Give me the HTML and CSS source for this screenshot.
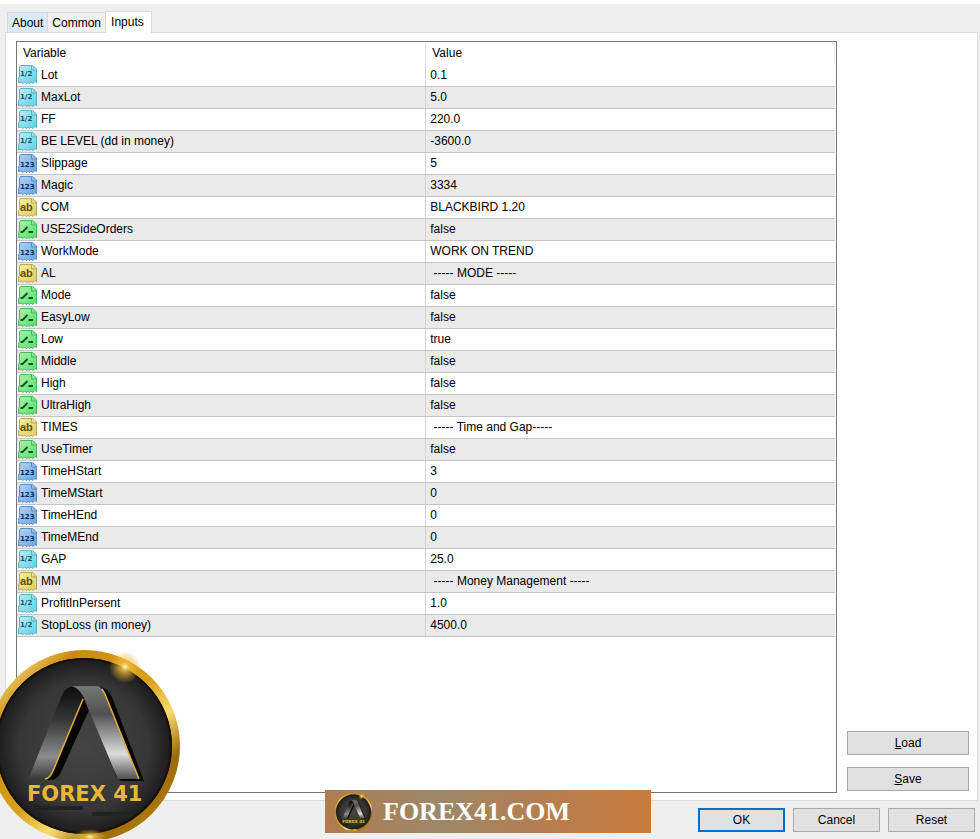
FILE: index.html
```
<!DOCTYPE html>
<html lang="en">
<head>
    <meta charset="UTF-8">
    <title>Inputs</title>
    <link rel="stylesheet" href="styles.css">
    <script src="script.js" defer></script>
</head>
<body>
<!-- shared fills and the icon sheet -->
<svg class="sprites" width="0" height="0" aria-hidden="true">
    <defs>
        <linearGradient id="cyan" x1="0" y1="0" x2="1" y2="1">
            <stop offset="0" stop-color="#b4f0f7"/>
            <stop offset="1" stop-color="#66cce2"/>
        </linearGradient>
        <linearGradient id="blue" x1="0" y1="0" x2="1" y2="1">
            <stop offset="0" stop-color="#b0d4fa"/>
            <stop offset="1" stop-color="#68a2e2"/>
        </linearGradient>
        <linearGradient id="yellow" x1="0" y1="0" x2="1" y2="1">
            <stop offset="0" stop-color="#f7efa0"/>
            <stop offset="1" stop-color="#e0cc5c"/>
        </linearGradient>
        <linearGradient id="green" x1="0" y1="0" x2="1" y2="1">
            <stop offset="0" stop-color="#a4f6a8"/>
            <stop offset="1" stop-color="#58dc70"/>
        </linearGradient>
        <linearGradient id="gold" x1="0" y1="0" x2="1" y2="1">
            <stop offset="0" stop-color="#c8860c"/>
            <stop offset="0.1" stop-color="#f0cc68"/>
            <stop offset="0.22" stop-color="#c98a10"/>
            <stop offset="0.5" stop-color="#d9a01c"/>
            <stop offset="0.64" stop-color="#f8dc70"/>
            <stop offset="0.78" stop-color="#9a6808"/>
            <stop offset="1" stop-color="#c8920f"/>
        </linearGradient>
        <radialGradient id="disc">
            <stop offset="0" stop-color="#454545"/>
            <stop offset="0.7" stop-color="#363636"/>
            <stop offset="1" stop-color="#161616"/>
        </radialGradient>
        <linearGradient id="legLeft" x1="0" y1="0" x2="0" y2="1">
            <stop offset="0" stop-color="#0c0c0c"/>
            <stop offset="0.35" stop-color="#333"/>
            <stop offset="0.75" stop-color="#8c8c8c"/>
            <stop offset="1" stop-color="#363636"/>
        </linearGradient>
        <linearGradient id="legRight" x1="0" y1="0" x2="0" y2="1">
            <stop offset="0" stop-color="#777"/>
            <stop offset="0.3" stop-color="#505050"/>
            <stop offset="0.73" stop-color="#dcdcdc"/>
            <stop offset="1" stop-color="#505050"/>
        </linearGradient>
        <radialGradient id="glow">
            <stop offset="0" stop-color="#fff6c8"/>
            <stop offset="0.3" stop-color="#f0bc38" stop-opacity="0.8"/>
            <stop offset="1" stop-color="#f0bc38" stop-opacity="0"/>
        </radialGradient>
        <g id="sheet">
            <path d="M1.500 2L2.500 .5H14.500L18.500 4V17.500L17 16.500L15 18.500L13 17L11.500 18.500L10 17.500L8 18.500L6.500 17L5 18.500L3 17L.6 18L.6 13L1.500 11Z"/>
            <path d="M13.500 .5V5H18.500" fill="none"/>
        </g>
    </defs>
</svg>

<main class="dialog">
    <div class="tabs" role="tablist">
        <button class="tab hover" role="tab">About</button>
        <button class="tab" role="tab">Common</button>
        <button class="tab active" role="tab" aria-selected="true">Inputs</button>
    </div>
    <div class="panel">
        <div class="list">
            <table>
                <thead>
                <tr>
                    <th>Variable</th>
                    <th>Value</th>
                </tr>
                </thead>
                <tbody></tbody>
            </table>
        </div>
        <div class="side">
            <button class="btn"><u>L</u>oad</button>
            <button class="btn"><u>S</u>ave</button>
        </div>
    </div>
    <div class="footer">
        <button class="btn primary">OK</button>
        <button class="btn">Cancel</button>
        <button class="btn">Reset</button>
    </div>
</main>

<svg class="badge" viewBox="0 0 192 192" role="img" aria-label="Forex 41">
    <g id="logo">
        <circle cx="96" cy="96" r="92" fill="url(#disc)" stroke="url(#gold)" stroke-width="8"/>
        <circle cx="96" cy="96" r="87" fill="none" stroke="#15100a" stroke-width="2"/>
        <path d="M40 130L74 45Q78 36 88 36L100 42L67 121Q63 130 57 130Z" fill="url(#legLeft)"/>
        <path d="M96 48L65 122Q62 129 58 130H62Q70 130 73 122L101 60Z" fill="#060606"/>
        <path d="M95 49L65 121Q62 128 57 129" fill="none" stroke="#e3ad35" stroke-width="1.500"/>
        <path d="M112 37Q120 38 124 47L156 131H133L128 126Z" fill="#060606"/>
        <path d="M84 36H108Q114 36 117 44L151 129H130L97 51Q93 39 84 36Z" fill="url(#legRight)"/>
        <path d="M114 39L117 44L151 129" fill="none" stroke="#e3ad35" stroke-width="1.500"/>
        <path d="M45 158H95M104 164H145" stroke="#242220" stroke-width="4"/>
        <text class="logo-text" x="39" y="151" fill="#e9b735">FOREX 41</text>
        <circle cx="137" cy="17" r="16" fill="url(#glow)"/>
        <ellipse cx="102" cy="187" rx="17" ry="8" fill="url(#glow)"/>
    </g>
</svg>
<div class="banner">
    <svg class="banner-logo" viewBox="0 0 192 192" aria-hidden="true"><use href="#logo"/></svg>
    <span>FOREX41.COM</span>
</div>
</body>
</html>
```
FILE: styles.css
```
* {
    box-sizing: border-box;
}
body {
    margin: 0;
    position: relative;
    overflow: hidden;
    background-color: #efefef;
    color: #000;
    font-family: "Liberation Sans", Arial, sans-serif;
    font-size: 12px;
}
button {
    font: inherit;
    color: inherit;
}
.sprites {
    position: absolute;
}
.glyph {
    font-family: "DejaVu Sans", sans-serif;
    font-weight: bold;
    font-size: 7px;
}
.glyph.letters {
    font-family: "Liberation Sans", Arial, sans-serif;
    font-size: 11px;
}
.logo-text {
    font-family: "DejaVu Sans", sans-serif;
    font-weight: bold;
    font-size: 21px;
}
.dialog {
    display: flex;
    flex-direction: column;
    min-height: 100vh;
    border-top: 4px solid #fff;
}
.tabs {
    display: flex;
    align-items: flex-end;
    padding: 7px 7px 0;
}
.tab {
    height: 20px;
    padding: 0 4px;
    border: 1px solid #d9d9d9;
    border-bottom: 0;
    border-right: 0;
    background-color: #f0f0f0;
}
.tab.hover {
    background-color: #d8eaf9;
}
.tab.active {
    height: 22px;
    padding: 0 7px 2px 5px;
    margin-bottom: -1px;
    border-right: 1px solid #d9d9d9;
    background-color: #fff;
    z-index: 1;
}
.panel {
    flex: 1;
    display: flex;
    gap: 10px;
    margin: 0 2px 0 5px;
    padding: 8px 8px 7px 10px;
    border: 1px solid #dcdcdc;
    background-color: #fff;
}
.list {
    flex: 1;
    border: 1px solid #73787f;
    padding: 1px 1px 1px 0;
}
table {
    width: 100%;
    border-collapse: collapse;
    table-layout: fixed;
}
th {
    height: 21px;
    padding: 0 6px 1px;
    font-weight: normal;
    text-align: left;
    border-right: 1px solid #e4e4e4;
}
td {
    height: 22px;
    padding: 0 4px;
    border-bottom: 1px solid #c4c4c4;
    white-space: pre;
}
td:first-child {
    padding: 0 1px;
    border-right: 1px solid #d4d4d4;
}
tbody tr:nth-child(even) {
    background-color: #eaeaea;
}
.name {
    display: flex;
    align-items: center;
    gap: 4px;
}
.icon {
    width: 19px;
    height: 19px;
}
.side {
    display: flex;
    flex-direction: column;
    justify-content: flex-end;
    gap: 12px;
    width: 122px;
    padding-bottom: 2px;
}
.btn {
    height: 24px;
    border: 1px solid #a9a9a9;
    background-color: #e1e1e1;
}
.footer {
    display: flex;
    justify-content: flex-end;
    gap: 8px;
    padding: 7px 5px 7px;
}
.footer .btn {
    width: 87px;
}
.footer .primary {
    border: 2px solid #0a6cc9;
}
.badge {
    position: absolute;
    left: -12px;
    bottom: -3px;
    width: 192px;
    height: 192px;
}
.banner {
    position: absolute;
    left: 325px;
    bottom: 6px;
    display: flex;
    align-items: center;
    gap: 8px;
    width: 326px;
    height: 43px;
    padding: 0 7px;
    background: linear-gradient(90deg, #b07c50, #9c8868 35%, #b47e52 65%, #c87c3e);
    color: #fff;
    font-family: "Liberation Serif", "Times New Roman", serif;
    font-weight: bold;
    font-size: 26px;
}
.banner-logo {
    width: 43px;
    height: 38px;
}
```
FILE: script.js
```
const inputs = [
    ["double", "Lot", "0.1"],
    ["double", "MaxLot", "5.0"],
    ["double", "FF", "220.0"],
    ["double", "BE LEVEL (dd in money)", "-3600.0"],
    ["int", "Slippage", "5"],
    ["int", "Magic", "3334"],
    ["string", "COM", "BLACKBIRD 1.20"],
    ["bool", "USE2SideOrders", "false"],
    ["int", "WorkMode", "WORK ON TREND"],
    ["string", "AL", " ----- MODE -----"],
    ["bool", "Mode", "false"],
    ["bool", "EasyLow", "false"],
    ["bool", "Low", "true"],
    ["bool", "Middle", "false"],
    ["bool", "High", "false"],
    ["bool", "UltraHigh", "false"],
    ["string", "TIMES", " ----- Time and Gap-----"],
    ["bool", "UseTimer", "false"],
    ["int", "TimeHStart", "3"],
    ["int", "TimeMStart", "0"],
    ["int", "TimeHEnd", "0"],
    ["int", "TimeMEnd", "0"],
    ["double", "GAP", "25.0"],
    ["string", "MM", " ----- Money Management -----"],
    ["double", "ProfitInPersent", "1.0"],
    ["double", "StopLoss (in money)", "4500.0"]
]

const icons = {
    double: `<use href="#sheet" fill="url(#cyan)" stroke="#58b4c8"/>
        <text class="glyph" x="2" y="11" fill="#08596e">1/2</text>`,
    int: `<use href="#sheet" fill="url(#blue)" stroke="#5c90c8"/>
        <text class="glyph" x="2" y="13" fill="#082c62">123</text>`,
    string: `<use href="#sheet" fill="url(#yellow)" stroke="#b8a858"/>
        <text class="glyph letters" x="2" y="13" fill="#5c5008">ab</text>`,
    bool: `<use href="#sheet" fill="url(#green)" stroke="#4cb85c"/>
        <path d="M2.500 12H4.500L9.500 7M10.500 12H15" fill="none" stroke="#0c5418" stroke-width="1.800"/>`
}

const tbody = document.querySelector("tbody")
inputs.forEach(([type, name, value]) => {
    const row = document.createElement("tr")
    row.innerHTML = `<td><div class="name"><svg class="icon" viewBox="0 0 19 19" aria-hidden="true">${icons[type]}</svg>${name}</div></td><td>${value}</td>`
    tbody.appendChild(row)
})
```
